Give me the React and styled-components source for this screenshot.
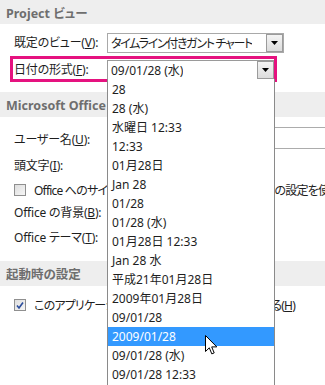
import styled, { createGlobalStyle } from "styled-components";

const GlobalStyle = createGlobalStyle`
  html, body {
    margin: 0;
    padding: 0;
    background: #ffffff;
  }
  body {
    font-family: "Noto Sans", "Noto Sans CJK JP", sans-serif;
    font-size: 12px;
    font-feature-settings: "palt";
    color: #1e1e1e;
    overflow: hidden;
  }
`;

const FORMATS = [
  "28",
  "28 (水)",
  "水曜日 12:33",
  "12:33",
  "01月28日",
  "Jan 28",
  "01/28",
  "01/28 (水)",
  "01月28日 12:33",
  "Jan 28 水",
  "平成21年01月28日",
  "2009年01月28日",
  "09/01/28",
  "2009/01/28",
  "09/01/28 (水)",
  "09/01/28 12:33",
];

const SELECTED = "2009/01/28";

function Accel({ children }) {
  return <u>{children}</u>;
}

function DropButton() {
  return (
    <ArrowButton>
      <svg width="7" height="4" viewBox="0 0 7 4">
        <path d="M0 0 H7 L3.5 4 Z" fill="#000" />
      </svg>
    </ArrowButton>
  );
}

function CheckBox({ checked }) {
  return (
    <Box>
      {checked && (
        <svg width="11" height="11" viewBox="0 0 11 11">
          <path d="M2.2 5.6 L4.4 8.2 L8.8 2.2" fill="none" stroke="#2b4d9c" strokeWidth="1.8" />
        </svg>
      )}
    </Box>
  );
}

export default function App() {
  return (
    <Page>
      <GlobalStyle />

      <SectionHeader $h={24}>Project ビュー</SectionHeader>
      <SectionBody $top={8} $bottom={11}>
        <FieldRow $h={22}>
          <Label>既定のビュー(<Accel>V</Accel>):</Label>
          <Combo $w={177}>
            <ComboText $tight>タイムライン付きガント チャート</ComboText>
            <DropButton />
          </Combo>
        </FieldRow>
        <FieldRow $h={22} style={{ marginTop: 5 }}>
          <Label>日付の形式(<Accel>F</Accel>):</Label>
          <Combo $w={168} $focused>
            <ComboText>09/01/28 (水)</ComboText>
            <DropButton />
          </Combo>
        </FieldRow>
      </SectionBody>

      <SectionHeader $h={25}>Microsoft Office のコピーの個人設定</SectionHeader>
      <SectionBody $top={10} $bottom={10}>
        <FieldRow $h={26}>
          <Label>ユーザー名(<Accel>U</Accel>):</Label>
          <TextBox $wide />
        </FieldRow>
        <FieldRow $h={26}>
          <Label>頭文字(<Accel>I</Accel>):</Label>
          <TextBox />
        </FieldRow>
        <CheckRow $h={22}>
          <CheckBox />
          <CheckLabel>
            Office へのサインイン状態にかかわらず常にこれらの設定を使用する(<Accel>A</Accel>)
          </CheckLabel>
        </CheckRow>
        <FieldRow $h={24}>
          <Label>Office の背景(<Accel>B</Accel>):</Label>
          <Combo $w={140}>
            <ComboText>背景なし</ComboText>
            <DropButton />
          </Combo>
        </FieldRow>
        <FieldRow $h={26}>
          <Label>Office テーマ(<Accel>T</Accel>):</Label>
          <Combo $w={140}>
            <ComboText>白</ComboText>
            <DropButton />
          </Combo>
        </FieldRow>
      </SectionBody>

      <SectionHeader $h={25}>起動時の設定</SectionHeader>
      <SectionBody $top={9} $bottom={10}>
        <CheckRow $h={20}>
          <CheckBox checked />
          <CheckLabel>
            このアプリケーション起動時スタート画面を表示する(<Accel>H</Accel>)
          </CheckLabel>
        </CheckRow>
      </SectionBody>

      <FocusFrame />

      <DropList>
        {FORMATS.map((f) => (
          <ListItem key={f} $selected={f === SELECTED}>
            {f}
          </ListItem>
        ))}
      </DropList>

      <Cursor width="13" height="21" viewBox="0 0 13 21">
        <path
          d="M0.5 0.5 L0.5 16.5 L4.3 12.8 L6.8 18.9 L9.2 17.9 L6.7 11.9 L11.8 11.9 Z"
          fill="#fff"
          stroke="#000"
          strokeWidth="1"
        />
      </Cursor>
    </Page>
  );
}

const Page = styled.div`
  position: relative;
  width: 325px;
  height: 385px;
  overflow: hidden;
  background: #ffffff;
`;

const SectionHeader = styled.div`
  height: ${(p) => p.$h}px;
  display: flex;
  align-items: center;
  padding-left: 6px;
  background: #eeeeee;
  color: #6e6e6e;
  font-weight: bold;
  font-size: 12.5px;
  white-space: nowrap;
  overflow: hidden;
`;

const SectionBody = styled.div`
  padding: ${(p) => p.$top}px 0 ${(p) => p.$bottom}px 14px;
  display: flex;
  flex-direction: column;
`;

const FieldRow = styled.div`
  height: ${(p) => p.$h}px;
  display: grid;
  grid-template-columns: 93px 1fr;
  align-items: center;
`;

const Label = styled.span`
  white-space: nowrap;
  line-height: 1;
  letter-spacing: -0.2px;
`;

const Combo = styled.div`
  box-sizing: border-box;
  width: ${(p) => p.$w}px;
  height: 20px;
  display: flex;
  align-items: center;
  justify-content: space-between;
  border: 1px solid ${(p) => (p.$focused ? "#9a9a9a" : "#a9a9a9")};
  background: #ffffff;
`;

const ComboText = styled.span`
  padding-left: 3px;
  white-space: nowrap;
  overflow: hidden;
  letter-spacing: ${(p) => (p.$tight ? "-1.3px" : "0")};
`;

const ArrowButton = styled.div`
  box-sizing: border-box;
  width: 17px;
  height: 18px;
  display: flex;
  align-items: center;
  justify-content: center;
  border: 1px solid #9b9b9b;
  background: linear-gradient(#f4f4f4, #dcdcdc);
  flex-shrink: 0;
`;

const TextBox = styled.div`
  box-sizing: border-box;
  align-self: start;
  height: 22px;
  width: ${(p) => (p.$wide ? "260px" : "80px")};
  border: 1px solid #acacac;
  background: #ffffff;
`;

const CheckRow = styled.div`
  height: ${(p) => p.$h}px;
  display: flex;
  align-items: center;
  gap: 8px;
`;

const Box = styled.div`
  box-sizing: border-box;
  width: 12px;
  height: 12px;
  border: 1px solid #8f8f8f;
  background: linear-gradient(135deg, #dedede, #f6f6f6);
  display: flex;
  align-items: center;
  justify-content: center;
  flex-shrink: 0;
`;

const CheckLabel = styled.span`
  white-space: nowrap;
  letter-spacing: -0.8px;
`;

const FocusFrame = styled.div`
  position: absolute;
  left: 10px;
  top: 56px;
  width: 267px;
  height: 26px;
  box-sizing: border-box;
  border: 3px solid #e5127f;
  pointer-events: none;
`;

const DropList = styled.div`
  position: absolute;
  left: 107px;
  top: 79px;
  width: 168px;
  box-sizing: border-box;
  border: 1px solid #8a8a8a;
  border-top: none;
  background: #ffffff;
  padding: 1px 0 12px;
`;

const ListItem = styled.div`
  height: 19px;
  line-height: 19px;
  padding-left: 4px;
  white-space: nowrap;
  background: ${(p) => (p.$selected ? "#3399ff" : "transparent")};
  color: ${(p) => (p.$selected ? "#ffffff" : "#1e1e1e")};
`;

const Cursor = styled.svg`
  position: absolute;
  left: 205px;
  top: 335px;
`;
